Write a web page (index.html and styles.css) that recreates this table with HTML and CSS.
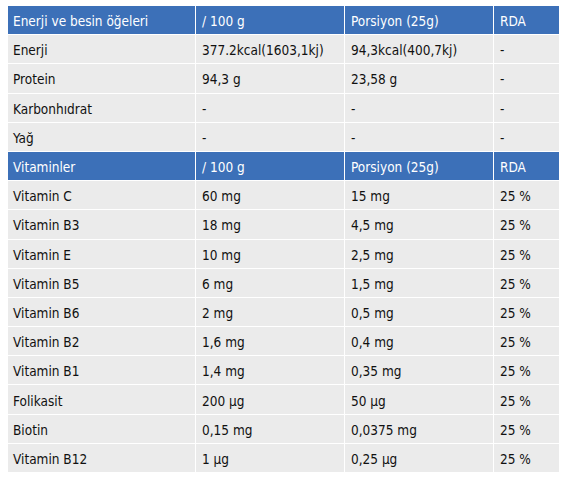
FILE: index.html
```html
<!DOCTYPE html>
<html>
<head>
<meta charset="utf-8">
<link rel="stylesheet" href="styles.css">
</head>
<body>
<table class="nutri">
  <colgroup>
    <col class="c1"><col class="c2"><col class="c3"><col class="c4">
  </colgroup>
  <tr class="head"><td>Enerji ve besin öğeleri</td><td>/ 100 g</td><td>Porsiyon (25g)</td><td>RDA</td></tr>
  <tr><td>Enerji</td><td>377.2kcal(1603,1kj)</td><td>94,3kcal(400,7kj)</td><td>-</td></tr>
  <tr><td>Protein</td><td>94,3 g</td><td>23,58 g</td><td>-</td></tr>
  <tr><td>Karbonhıdrat</td><td>-</td><td>-</td><td>-</td></tr>
  <tr><td>Yağ</td><td>-</td><td>-</td><td>-</td></tr>
  <tr class="head"><td>Vitaminler</td><td>/ 100 g</td><td>Porsiyon (25g)</td><td>RDA</td></tr>
  <tr><td>Vitamin C</td><td>60 mg</td><td>15 mg</td><td>25 %</td></tr>
  <tr><td>Vitamin B3</td><td>18 mg</td><td>4,5 mg</td><td>25 %</td></tr>
  <tr><td>Vitamin E</td><td>10 mg</td><td>2,5 mg</td><td>25 %</td></tr>
  <tr><td>Vitamin B5</td><td>6 mg</td><td>1,5 mg</td><td>25 %</td></tr>
  <tr><td>Vitamin B6</td><td>2 mg</td><td>0,5 mg</td><td>25 %</td></tr>
  <tr><td>Vitamin B2</td><td>1,6 mg</td><td>0,4 mg</td><td>25 %</td></tr>
  <tr><td>Vitamin B1</td><td>1,4 mg</td><td>0,35 mg</td><td>25 %</td></tr>
  <tr><td>Folikasit</td><td>200 µg</td><td>50 µg</td><td>25 %</td></tr>
  <tr><td>Biotin</td><td>0,15 mg</td><td>0,0375 mg</td><td>25 %</td></tr>
  <tr><td>Vitamin B12</td><td>1 µg</td><td>0,25 µg</td><td>25 %</td></tr>
</table>
</body>
</html>
```

FILE: styles.css
```css
html, body {
  margin: 0;
  padding: 0;
  background: #ffffff;
}
body {
  padding: 5px 0 0 7px;
  font-family: "DejaVu Sans Condensed", "DejaVu Sans", sans-serif;
  font-size: 13.5px;
  color: #111111;
}
.nutri {
  border-collapse: separate;
  border-spacing: 1px;
  table-layout: fixed;
  width: 553px;
}
.c1 { width: 187px; }
.c2 { width: 148px; }
.c3 { width: 148px; }
.c4 { width: 65px; }
.nutri td {
  background: #ebebeb;
  height: 28.2px;
  padding: 2px 0 0 5px;
  box-sizing: border-box;
  white-space: nowrap;
  vertical-align: middle;
}
.nutri td + td {
  padding-left: 6px;
}
.nutri .head td {
  background: #3c70b8;
  color: #ffffff;
}
```
